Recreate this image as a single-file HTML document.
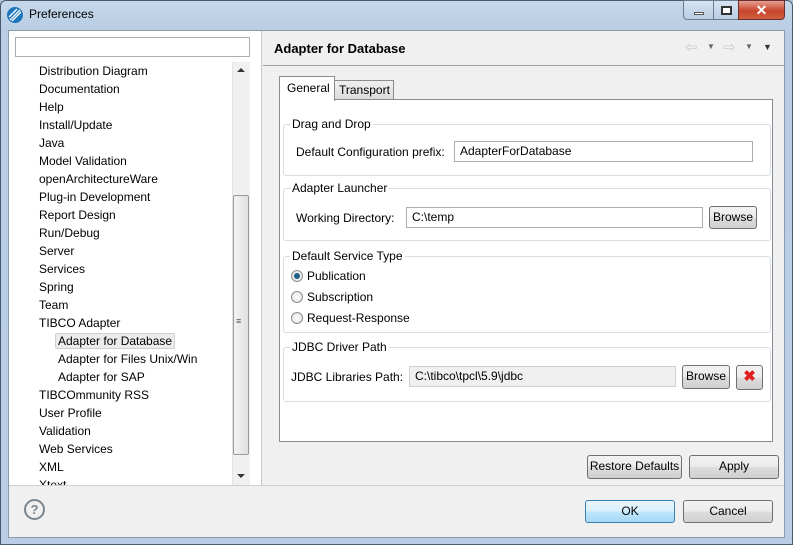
<!DOCTYPE html><html><head><style>
*{margin:0;padding:0;box-sizing:border-box}
body{width:793px;height:545px;overflow:hidden;font-family:"Liberation Sans",sans-serif;font-size:12px;color:#000;position:relative;background:#a9c4df}
.a{position:absolute}
.frame{left:0;top:0;width:793px;height:545px;background:linear-gradient(180deg,#c6d8ea 0,#b8cde3 30px,#b9cee4 100%);border:1px solid #4a5a6c;border-radius:6px 6px 0 0}
.t{position:absolute;white-space:nowrap}
.in{position:absolute;background:#fff;border:1px solid #abadb3;padding-left:5px;line-height:18px}
.btn{position:absolute;border:1px solid #707070;border-radius:3px;background:linear-gradient(#f2f2f2,#ebebeb 50%,#dddddd 51%,#cfcfcf);text-align:center;line-height:21px}
.grp{position:absolute;border:1px solid #d5dfe5;border-radius:3px}
.gl{position:absolute;background:#fff;padding:0 2px;top:-9px;left:6px;line-height:16px}
.rad{position:absolute;width:12px;height:12px;border-radius:50%;border:1px solid #8e8f8f;background:radial-gradient(#fff,#ddd)}
</style></head><body>
<div class="a frame"></div>
<svg class="a" style="left:6px;top:6px" width="18" height="18"><circle cx="9" cy="9" r="8" fill="#1c75bc"/><path d="M4 14 L14 4 M6 15 L15 6 M3 11 L11 3" stroke="#fff" stroke-width="1.3"/></svg>
<div class="t" style="left:29px;top:7px;font-size:12px">Preferences</div>
<div class="a" style="left:683px;top:0;width:31px;height:20px;border:1px solid #6a7c90;border-radius:0 0 0 4px;background:linear-gradient(#d7e4f2,#b9cde2)"><div class="a" style="left:10px;top:11px;width:10px;height:3px;background:#fff;border:1px solid #555"></div></div>
<div class="a" style="left:713px;top:0;width:26px;height:20px;border:1px solid #6a7c90;background:linear-gradient(#d7e4f2,#b9cde2)"><div class="a" style="left:7px;top:5px;width:11px;height:9px;border:2px solid #333;background:#fff"></div></div>
<div class="a" style="left:738px;top:0;width:47px;height:20px;border:1px solid #6a3030;border-radius:0 0 4px 0;background:linear-gradient(#e8a090,#c8442c 55%,#d06040);color:#fff;font-weight:bold;text-align:center;line-height:18px;font-size:14px">✕</div>
<div class="a" style="left:8px;top:30px;width:777px;height:508px;background:#f0f0f0;border:1px solid #8b9aab"></div>
<div class="a" style="left:9px;top:31px;width:253px;height:454px;background:#fff;border-right:1px solid #c8c8c8"></div>
<div class="a" style="left:15px;top:37px;width:235px;height:20px;border:1px solid #abadb3;background:#fff"></div>
<div class="a" style="left:15px;top:62px;width:235px;height:423px;overflow:hidden">
<div style="position:absolute;left:24px;top:0;line-height:18px">
Distribution Diagram<br>Documentation<br>Help<br>Install/Update<br>Java<br>Model Validation<br>openArchitectureWare<br>Plug-in Development<br>Report Design<br>Run/Debug<br>Server<br>Services<br>Spring<br>Team<br>TIBCO Adapter<br><span style="margin-left:19px;background:#ececec;border:1px solid #d0d0d0;border-radius:2px;padding:0 2px;margin-left:16px">Adapter for Database</span><br><span style="margin-left:19px">Adapter for Files Unix/Win</span><br><span style="margin-left:19px">Adapter for SAP</span><br>TIBCOmmunity RSS<br>User Profile<br>Validation<br>Web Services<br>XML<br>Xtext</div>
<div class="a" style="left:217px;top:0;width:18px;height:423px;background:#f0f0f0;border-left:1px solid #e3e3e3"></div>
<div class="a" style="left:222px;top:6px;width:0;height:0;border:4px solid transparent;border-bottom-color:#333;border-top:0"></div>
<div class="a" style="left:222px;top:412px;width:0;height:0;border:4px solid transparent;border-top-color:#333;border-bottom:0"></div>
<div class="a" style="left:218px;top:133px;width:16px;height:260px;border:1px solid #9a9a9a;border-radius:2px;background:linear-gradient(90deg,#f3f3f3,#e0e0e0)"></div>
<div class="t" style="left:221px;top:254px;font-size:9px;color:#555">≡</div>
</div>
<div class="t" style="left:274px;top:41px;font-weight:bold;font-size:13px">Adapter for Database</div>
<div class="t" style="left:685px;top:38px;color:#ccc;font-size:15px">⇦</div><div class="t" style="left:707px;top:42px;font-size:8px;color:#666">▼</div>
<div class="t" style="left:723px;top:38px;color:#ccc;font-size:15px">⇨</div><div class="t" style="left:745px;top:42px;font-size:8px;color:#666">▼</div>
<div class="t" style="left:763px;top:42px;font-size:9px;color:#333">▼</div>
<div class="a" style="left:263px;top:65px;width:522px;height:1px;background:#a0a0a0"></div>
<div class="a" style="left:279px;top:99px;width:494px;height:343px;background:#fff;border:1px solid #898c95"></div>
<div class="a" style="left:334px;top:80px;width:60px;height:20px;background:linear-gradient(#f0f0f0,#dcdcdc);border:1px solid #898c95"></div>
<div class="t" style="left:339px;top:83px">Transport</div>
<div class="a" style="left:279px;top:76px;width:56px;height:25px;background:#fff;border:1px solid #898c95;border-bottom:0"></div>
<div class="t" style="left:287px;top:81px">General</div>
<div class="grp" style="left:283px;top:124px;width:488px;height:52px"><div class="gl">Drag and Drop</div></div>
<div class="t" style="left:296px;top:145px">Default Configuration prefix:</div>
<div class="in" style="left:454px;top:141px;width:299px;height:21px">AdapterForDatabase</div>
<div class="grp" style="left:283px;top:188px;width:488px;height:53px"><div class="gl">Adapter Launcher</div></div>
<div class="t" style="left:296px;top:211px">Working Directory:</div>
<div class="in" style="left:406px;top:207px;width:297px;height:21px">C:\temp</div>
<div class="btn" style="left:709px;top:206px;width:48px;height:23px">Browse</div>
<div class="grp" style="left:283px;top:256px;width:488px;height:77px"><div class="gl">Default Service Type</div></div>
<div class="rad" style="left:291px;top:270px"><div class="a" style="left:2px;top:2px;width:6px;height:6px;border-radius:50%;background:#1d5f8a"></div></div>
<div class="t" style="left:307px;top:269px">Publication</div>
<div class="rad" style="left:291px;top:291px"></div><div class="t" style="left:307px;top:290px">Subscription</div>
<div class="rad" style="left:291px;top:312px"></div><div class="t" style="left:307px;top:311px">Request-Response</div>
<div class="grp" style="left:283px;top:347px;width:488px;height:55px"><div class="gl">JDBC Driver Path</div></div>
<div class="t" style="left:291px;top:370px">JDBC Libraries Path:</div>
<div class="in" style="left:409px;top:366px;width:267px;height:21px;background:#f0f0f0;border-color:#d0d0d0">C:\tibco\tpcl\5.9\jdbc</div>
<div class="btn" style="left:682px;top:365px;width:48px;height:24px">Browse</div>
<div class="btn" style="left:736px;top:365px;width:27px;height:25px;color:#e02020;font-weight:bold;font-size:15px">✖</div>
<div class="btn" style="left:587px;top:455px;width:95px;height:24px">Restore Defaults</div>
<div class="btn" style="left:689px;top:455px;width:90px;height:24px">Apply</div>
<div class="a" style="left:9px;top:485px;width:775px;height:1px;background:#d0d0d0"></div>
<div class="a" style="left:24px;top:499px;width:21px;height:21px;border:2px solid #7a8590;border-radius:50%;text-align:center;line-height:17px;font-weight:bold;color:#7a8590;font-size:13px">?</div>
<div class="btn" style="left:585px;top:500px;width:90px;height:23px;border-color:#3c7fb1;background:linear-gradient(#eaf6fd,#d9f0fc 50%,#bee6fd 51%,#a7d9f5)">OK</div>
<div class="btn" style="left:683px;top:500px;width:90px;height:23px">Cancel</div>
</body></html>
